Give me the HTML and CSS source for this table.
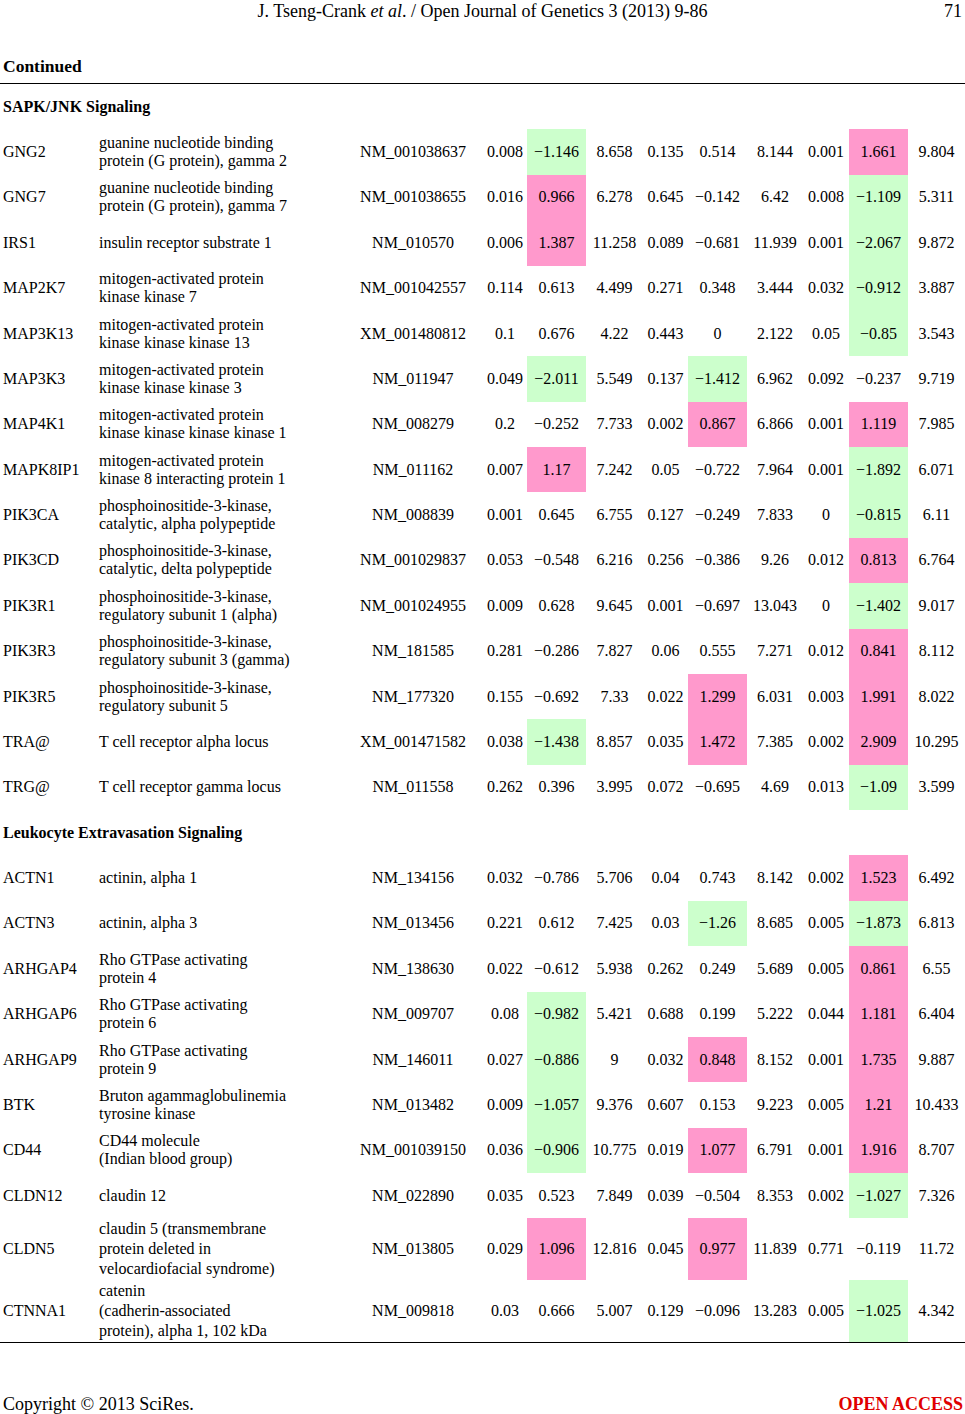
FILE: index.html
```html
<!DOCTYPE html>
<html lang="en">
<head>
<meta charset="utf-8">
<title>Continued table</title>
<link rel="stylesheet" href="styles.css">
</head>
<body>
<div class="page">
  <header class="running-head">
    <span></span>
    <span class="journal">J. Tseng-Crank <i>et al</i>. / Open Journal of Genetics 3 (2013) 9-86</span>
    <span class="pageno">71</span>
  </header>
  <div class="caption">Continued</div>

  <div class="table">
    <div class="section">SAPK/JNK Signaling</div>

    <div class="row"><div class="c gene">GNG2</div><div class="c desc">guanine nucleotide binding<br>protein (G protein), gamma 2</div><div class="c acc">NM_001038637</div><div class="c num">0.008</div><div class="c num down">−1.146</div><div class="c num">8.658</div><div class="c num">0.135</div><div class="c num">0.514</div><div class="c num">8.144</div><div class="c num">0.001</div><div class="c num up">1.661</div><div class="c num">9.804</div></div>

    <div class="row"><div class="c gene">GNG7</div><div class="c desc">guanine nucleotide binding<br>protein (G protein), gamma 7</div><div class="c acc">NM_001038655</div><div class="c num">0.016</div><div class="c num up">0.966</div><div class="c num">6.278</div><div class="c num">0.645</div><div class="c num">−0.142</div><div class="c num">6.42</div><div class="c num">0.008</div><div class="c num down">−1.109</div><div class="c num">5.311</div></div>

    <div class="row"><div class="c gene">IRS1</div><div class="c desc">insulin receptor substrate 1</div><div class="c acc">NM_010570</div><div class="c num">0.006</div><div class="c num up">1.387</div><div class="c num">11.258</div><div class="c num">0.089</div><div class="c num">−0.681</div><div class="c num">11.939</div><div class="c num">0.001</div><div class="c num down">−2.067</div><div class="c num">9.872</div></div>

    <div class="row"><div class="c gene">MAP2K7</div><div class="c desc">mitogen-activated protein<br>kinase kinase 7</div><div class="c acc">NM_001042557</div><div class="c num">0.114</div><div class="c num">0.613</div><div class="c num">4.499</div><div class="c num">0.271</div><div class="c num">0.348</div><div class="c num">3.444</div><div class="c num">0.032</div><div class="c num down">−0.912</div><div class="c num">3.887</div></div>

    <div class="row"><div class="c gene">MAP3K13</div><div class="c desc">mitogen-activated protein<br>kinase kinase kinase 13</div><div class="c acc">XM_001480812</div><div class="c num">0.1</div><div class="c num">0.676</div><div class="c num">4.22</div><div class="c num">0.443</div><div class="c num">0</div><div class="c num">2.122</div><div class="c num">0.05</div><div class="c num down">−0.85</div><div class="c num">3.543</div></div>

    <div class="row"><div class="c gene">MAP3K3</div><div class="c desc">mitogen-activated protein<br>kinase kinase kinase 3</div><div class="c acc">NM_011947</div><div class="c num">0.049</div><div class="c num down">−2.011</div><div class="c num">5.549</div><div class="c num">0.137</div><div class="c num down">−1.412</div><div class="c num">6.962</div><div class="c num">0.092</div><div class="c num">−0.237</div><div class="c num">9.719</div></div>

    <div class="row"><div class="c gene">MAP4K1</div><div class="c desc">mitogen-activated protein<br>kinase kinase kinase kinase 1</div><div class="c acc">NM_008279</div><div class="c num">0.2</div><div class="c num">−0.252</div><div class="c num">7.733</div><div class="c num">0.002</div><div class="c num up">0.867</div><div class="c num">6.866</div><div class="c num">0.001</div><div class="c num up">1.119</div><div class="c num">7.985</div></div>

    <div class="row"><div class="c gene">MAPK8IP1</div><div class="c desc">mitogen-activated protein<br>kinase 8 interacting protein 1</div><div class="c acc">NM_011162</div><div class="c num">0.007</div><div class="c num up">1.17</div><div class="c num">7.242</div><div class="c num">0.05</div><div class="c num">−0.722</div><div class="c num">7.964</div><div class="c num">0.001</div><div class="c num down">−1.892</div><div class="c num">6.071</div></div>

    <div class="row"><div class="c gene">PIK3CA</div><div class="c desc">phosphoinositide-3-kinase,<br>catalytic, alpha polypeptide</div><div class="c acc">NM_008839</div><div class="c num">0.001</div><div class="c num">0.645</div><div class="c num">6.755</div><div class="c num">0.127</div><div class="c num">−0.249</div><div class="c num">7.833</div><div class="c num">0</div><div class="c num down">−0.815</div><div class="c num">6.11</div></div>

    <div class="row"><div class="c gene">PIK3CD</div><div class="c desc">phosphoinositide-3-kinase,<br>catalytic, delta polypeptide</div><div class="c acc">NM_001029837</div><div class="c num">0.053</div><div class="c num">−0.548</div><div class="c num">6.216</div><div class="c num">0.256</div><div class="c num">−0.386</div><div class="c num">9.26</div><div class="c num">0.012</div><div class="c num up">0.813</div><div class="c num">6.764</div></div>

    <div class="row"><div class="c gene">PIK3R1</div><div class="c desc">phosphoinositide-3-kinase,<br>regulatory subunit 1 (alpha)</div><div class="c acc">NM_001024955</div><div class="c num">0.009</div><div class="c num">0.628</div><div class="c num">9.645</div><div class="c num">0.001</div><div class="c num">−0.697</div><div class="c num">13.043</div><div class="c num">0</div><div class="c num down">−1.402</div><div class="c num">9.017</div></div>

    <div class="row"><div class="c gene">PIK3R3</div><div class="c desc">phosphoinositide-3-kinase,<br>regulatory subunit 3 (gamma)</div><div class="c acc">NM_181585</div><div class="c num">0.281</div><div class="c num">−0.286</div><div class="c num">7.827</div><div class="c num">0.06</div><div class="c num">0.555</div><div class="c num">7.271</div><div class="c num">0.012</div><div class="c num up">0.841</div><div class="c num">8.112</div></div>

    <div class="row"><div class="c gene">PIK3R5</div><div class="c desc">phosphoinositide-3-kinase,<br>regulatory subunit 5</div><div class="c acc">NM_177320</div><div class="c num">0.155</div><div class="c num">−0.692</div><div class="c num">7.33</div><div class="c num">0.022</div><div class="c num up">1.299</div><div class="c num">6.031</div><div class="c num">0.003</div><div class="c num up">1.991</div><div class="c num">8.022</div></div>

    <div class="row"><div class="c gene">TRA@</div><div class="c desc">T cell receptor alpha locus</div><div class="c acc">XM_001471582</div><div class="c num">0.038</div><div class="c num down">−1.438</div><div class="c num">8.857</div><div class="c num">0.035</div><div class="c num up">1.472</div><div class="c num">7.385</div><div class="c num">0.002</div><div class="c num up">2.909</div><div class="c num">10.295</div></div>

    <div class="row"><div class="c gene">TRG@</div><div class="c desc">T cell receptor gamma locus</div><div class="c acc">NM_011558</div><div class="c num">0.262</div><div class="c num">0.396</div><div class="c num">3.995</div><div class="c num">0.072</div><div class="c num">−0.695</div><div class="c num">4.69</div><div class="c num">0.013</div><div class="c num down">−1.09</div><div class="c num">3.599</div></div>

    <div class="section">Leukocyte Extravasation Signaling</div>

    <div class="row"><div class="c gene">ACTN1</div><div class="c desc">actinin, alpha 1</div><div class="c acc">NM_134156</div><div class="c num">0.032</div><div class="c num">−0.786</div><div class="c num">5.706</div><div class="c num">0.04</div><div class="c num">0.743</div><div class="c num">8.142</div><div class="c num">0.002</div><div class="c num up">1.523</div><div class="c num">6.492</div></div>

    <div class="row"><div class="c gene">ACTN3</div><div class="c desc">actinin, alpha 3</div><div class="c acc">NM_013456</div><div class="c num">0.221</div><div class="c num">0.612</div><div class="c num">7.425</div><div class="c num">0.03</div><div class="c num down">−1.26</div><div class="c num">8.685</div><div class="c num">0.005</div><div class="c num down">−1.873</div><div class="c num">6.813</div></div>

    <div class="row"><div class="c gene">ARHGAP4</div><div class="c desc">Rho GTPase activating<br>protein 4</div><div class="c acc">NM_138630</div><div class="c num">0.022</div><div class="c num">−0.612</div><div class="c num">5.938</div><div class="c num">0.262</div><div class="c num">0.249</div><div class="c num">5.689</div><div class="c num">0.005</div><div class="c num up">0.861</div><div class="c num">6.55</div></div>

    <div class="row"><div class="c gene">ARHGAP6</div><div class="c desc">Rho GTPase activating<br>protein 6</div><div class="c acc">NM_009707</div><div class="c num">0.08</div><div class="c num down">−0.982</div><div class="c num">5.421</div><div class="c num">0.688</div><div class="c num">0.199</div><div class="c num">5.222</div><div class="c num">0.044</div><div class="c num up">1.181</div><div class="c num">6.404</div></div>

    <div class="row"><div class="c gene">ARHGAP9</div><div class="c desc">Rho GTPase activating<br>protein 9</div><div class="c acc">NM_146011</div><div class="c num">0.027</div><div class="c num down">−0.886</div><div class="c num">9</div><div class="c num">0.032</div><div class="c num up">0.848</div><div class="c num">8.152</div><div class="c num">0.001</div><div class="c num up">1.735</div><div class="c num">9.887</div></div>

    <div class="row"><div class="c gene">BTK</div><div class="c desc">Bruton agammaglobulinemia<br>tyrosine kinase</div><div class="c acc">NM_013482</div><div class="c num">0.009</div><div class="c num down">−1.057</div><div class="c num">9.376</div><div class="c num">0.607</div><div class="c num">0.153</div><div class="c num">9.223</div><div class="c num">0.005</div><div class="c num up">1.21</div><div class="c num">10.433</div></div>

    <div class="row"><div class="c gene">CD44</div><div class="c desc">CD44 molecule<br>(Indian blood group)</div><div class="c acc">NM_001039150</div><div class="c num">0.036</div><div class="c num down">−0.906</div><div class="c num">10.775</div><div class="c num">0.019</div><div class="c num up">1.077</div><div class="c num">6.791</div><div class="c num">0.001</div><div class="c num up">1.916</div><div class="c num">8.707</div></div>

    <div class="row"><div class="c gene">CLDN12</div><div class="c desc">claudin 12</div><div class="c acc">NM_022890</div><div class="c num">0.035</div><div class="c num">0.523</div><div class="c num">7.849</div><div class="c num">0.039</div><div class="c num">−0.504</div><div class="c num">8.353</div><div class="c num">0.002</div><div class="c num down">−1.027</div><div class="c num">7.326</div></div>

    <div class="row tall"><div class="c gene">CLDN5</div><div class="c desc">claudin 5 (transmembrane<br>protein deleted in<br>velocardiofacial syndrome)</div><div class="c acc">NM_013805</div><div class="c num">0.029</div><div class="c num up">1.096</div><div class="c num">12.816</div><div class="c num">0.045</div><div class="c num up">0.977</div><div class="c num">11.839</div><div class="c num">0.771</div><div class="c num">−0.119</div><div class="c num">11.72</div></div>

    <div class="row tall"><div class="c gene">CTNNA1</div><div class="c desc">catenin<br>(cadherin-associated<br>protein), alpha 1, 102 kDa</div><div class="c acc">NM_009818</div><div class="c num">0.03</div><div class="c num">0.666</div><div class="c num">5.007</div><div class="c num">0.129</div><div class="c num">−0.096</div><div class="c num">13.283</div><div class="c num">0.005</div><div class="c num down">−1.025</div><div class="c num">4.342</div></div>
  </div>

  <footer class="page-foot">
    <span class="copy">Copyright © 2013 SciRes.</span>
    <span class="oa">OPEN ACCESS</span>
  </footer>
</div>
</body>
</html>
```

FILE: styles.css
```css
html, body {
  margin: 0;
  padding: 0;
  background: #ffffff;
}

body {
  font-family: "Liberation Serif", "Times New Roman", serif;
  color: #000000;
  width: 965px;
}

.page {
  width: 965px;
}

.running-head {
  display: grid;
  grid-template-columns: 1fr auto 1fr;
  align-items: center;
  height: 22px;
  font-size: 18px;
  line-height: 22px;
}

.running-head .pageno {
  justify-self: end;
  padding-right: 3px;
}

.caption {
  margin-top: 34px;
  padding-left: 3px;
  font-size: 17.5px;
  line-height: 20px;
  font-weight: bold;
  height: 27px;
}

.table {
  border-top: 1px solid #000000;
  border-bottom: 1px solid #000000;
  font-size: 16px;
}

.section {
  height: 45.375px;
  display: flex;
  align-items: center;
  padding-left: 3px;
  font-weight: bold;
}

.row {
  display: grid;
  grid-template-columns: 96px 259px 128px 44px 59px 57px 45px 59px 56px 46px 59px 57px;
  height: 45.375px;
}

.row.tall {
  height: 62px;
}

.c {
  display: flex;
  align-items: center;
  white-space: nowrap;
  line-height: 18px;
}

.row.tall .c {
  line-height: 20px;
}

.gene {
  padding-left: 3px;
}

.desc {
  padding-left: 3px;
}

.acc {
  justify-content: center;
  padding-right: 12px;
}

.num {
  justify-content: center;
}

.up {
  background: #ff99cc;
}

.down {
  background: #ccffcc;
}

.page-foot {
  display: flex;
  justify-content: space-between;
  align-items: center;
  margin-top: 50px;
  font-size: 18px;
  line-height: 22px;
  padding: 0 2px 0 3px;
}

.oa {
  color: #e00000;
  font-weight: bold;
}
```
